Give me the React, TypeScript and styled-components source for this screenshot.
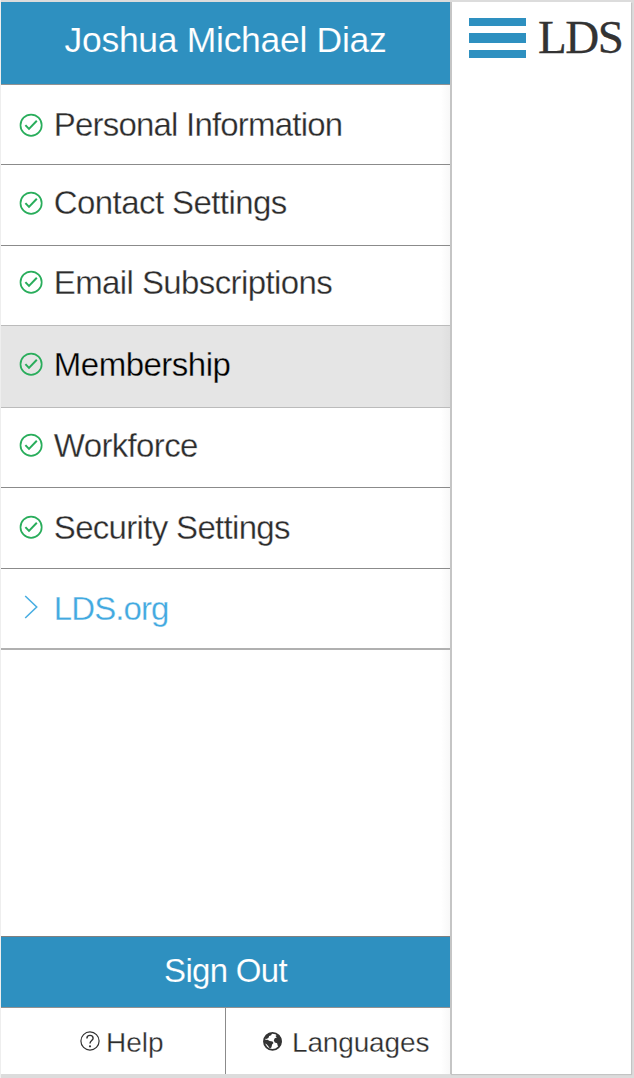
import React from 'react';
import styled, { createGlobalStyle } from 'styled-components';

const GlobalStyle = createGlobalStyle`
  * { box-sizing: border-box; }
  body { margin: 0; background: #dcdcdc; }
`;

const Page = styled.div`
  display: flex;
  width: 634px;
  height: 1078px;
  padding: 2px 3px 4px 1px;
  background: linear-gradient(to right, #eee 1px, #dcdcdc 1px);
  font-family: 'Liberation Sans', Helvetica, Arial, sans-serif;
  color: #333;
`;

const Sidebar = styled.aside`
  display: flex;
  flex-direction: column;
  width: 449px;
  height: 1072px;
  background: linear-gradient(to left, #f8f8f8, #fff 9px);
`;

/* A hairline in the surface colour trims the strokes to a light weight. */
const Text = styled.span<{ $size?: number; $spacing?: number; $surface?: string; $trim?: number }>`
  font-size: ${(p) => p.$size ?? 33}px;
  letter-spacing: ${(p) => p.$spacing ?? 0}px;
  line-height: 40px;
  white-space: nowrap;
  -webkit-text-stroke: ${(p) => p.$trim ?? 0.3}px ${(p) => p.$surface ?? '#fff'};
`;

const Header = styled.header`
  display: flex;
  justify-content: center;
  height: 82.5px;
  padding-top: 18px;
  background: #2e90c0;
  border-bottom: 1px solid #929292;
  color: #fff;
`;

const Menu = styled.nav`
  display: flex;
  flex-direction: column;
  flex: 1;
`;

const MenuItem = styled.a<{ $height: number; $top: number; $active?: boolean; $link?: boolean; $line: string }>`
  display: flex;
  align-items: flex-start;
  height: ${(p) => p.$height}px;
  padding: ${(p) => p.$top}px 0 0 17px;
  gap: 11.8px;
  border-bottom: ${(p) => (p.$link ? 2 : 1)}px solid ${(p) => p.$line};
  background: ${(p) => (p.$active ? 'linear-gradient(to left, #dfdfdf, #e5e5e5 9px)' : 'transparent')};
  color: ${(p) => (p.$active ? '#000' : p.$link ? '#42a9e0' : '#2c2c2c')};
`;

const IconSlot = styled.span<{ $drop: number }>`
  display: flex;
  width: 24px;
  height: 24px;
  margin-top: ${(p) => p.$drop}px;
  svg { overflow: visible; }
`;

const SignOut = styled.button`
  display: flex;
  justify-content: center;
  height: 72px;
  padding: 14px 0 0;
  border: 0;
  border-top: 1px solid #808080;
  border-bottom: 1px solid #929292;
  background: #2e90c0;
  font: inherit;
  color: #fff;
`;

const Footer = styled.footer`
  display: flex;
  height: 66px;
`;

const FooterLink = styled.a<{ $left: number; $width: number; $gap: number }>`
  display: flex;
  align-items: flex-start;
  width: ${(p) => p.$width}px;
  padding: 15px 0 0 ${(p) => p.$left}px;
  gap: ${(p) => p.$gap}px;
  color: #2c2c2c;
  & + & { border-left: 1px solid #8b8b8b; }
  svg { flex: none; margin-top: 8px; }
  & + & svg { margin-top: 9px; }
`;

const Content = styled.main`
  display: flex;
  align-items: flex-start;
  width: 181px;
  height: 1072px;
  padding: 15px 0 0 17px;
  gap: 12px;
  background: #fff;
  border-left: 2px solid #c5c5c5;
  box-shadow: 1px 1px 1px #c4c4c4;
`;

const Burger = styled.button`
  display: flex;
  flex-direction: column;
  width: 57px;
  padding: 1px 0 0;
  border: 0;
  background: none;
  gap: 7px;
`;

const Bar = styled.span<{ $height: number }>`
  height: ${(p) => p.$height}px;
  background: #2e90c0;
`;

const Logo = styled.span`
  margin-top: -4px;
  font: 47px/48px 'Liberation Serif', serif;
  letter-spacing: -1.5px;
  color: #333;
  -webkit-text-stroke: 0.3px #333;
`;

const CheckIcon = () => (
  <svg width="24" height="24" viewBox="0 0 24 24" fill="none" stroke="#29ad5b">
    <circle cx="13.1" cy="12.2" r="10.6" strokeWidth="1.7" />
    <path d="M7.4 12.1l3.6 3.8 7.8-8.1" strokeWidth="2" />
  </svg>
);

const ChevronIcon = () => (
  <svg width="24" height="24" viewBox="0 0 24 24" fill="none" stroke="#4aaee2" strokeWidth="1.6">
    <path d="M7.2 1l11.5 11-11.5 11" />
  </svg>
);

const HelpIcon = () => (
  <svg width="20" height="20" viewBox="0 0 20 20" fill="none" stroke="#333">
    <circle cx="10" cy="10" r="9.1" strokeWidth="1.2" />
    <path d="M6.9 7.4C6.9 5.4 8.2 4.4 10 4.4s3.1 1 3.1 2.8c0 2.3-3.1 2.4-3.1 5.2" strokeWidth="1.4" />
    <circle cx="10" cy="15.3" r="1.1" fill="#333" stroke="none" />
  </svg>
);

const GlobeIcon = () => (
  <svg width="20" height="20" viewBox="0 0 20 20" fill="#333">
    <circle cx="10.5" cy="10.4" r="8.5" fill="none" stroke="#333" strokeWidth="1.9" />
    <path d="M2.2 9l3.3-.3 2.2 1.3 2.8.5 1 1.5-1.4 1.6-.6 2.7-1.6 1.5-1.6-2.6-1.7-2-2.1-1z" />
    <path d="M5 3.4l3-1.6 2 .7-.8 1.7-2 .8-.8 2-2.2 1L3 7.2z" />
    <path d="M13.4 5.1l1.8-1.4 2.2.9 1.8 3.2.3 3.5-1.7 3.5-1.9.5-.8-3-2.3-.7-1-2.1.9-2.2 2.2-.7z" />
  </svg>
);

const items = [
  { label: 'Personal Information', height: 80.5, top: 20.5, drop: 8, spacing: -0.8, line: '#8b8b8b' },
  { label: 'Contact Settings', height: 81, top: 18, drop: 8, spacing: -0.58, line: '#8b8b8b' },
  { label: 'Email Subscriptions', height: 80, top: 17, drop: 7, spacing: -0.6, line: '#bbb' },
  { label: 'Membership', height: 82, top: 19, drop: 6.7, spacing: -0.5, line: '#bbb', active: true },
  { label: 'Workforce', height: 80, top: 18, drop: 7, spacing: -0.65, line: '#8b8b8b' },
  { label: 'Security Settings', height: 81, top: 20, drop: 7.4, spacing: -0.68, line: '#8b8b8b' },
  { label: 'LDS.org', height: 81, top: 20, drop: 6, spacing: -0.9, line: '#b0b0b0', link: true },
];

export default function App() {
  return (
    <>
      <GlobalStyle />
      <Page>
        <Sidebar>
          <Header><Text $size={35.5} $spacing={-0.3} $surface="#2e90c0" $trim={0.15}>Joshua Michael Diaz</Text></Header>
          <Menu>
            {items.map((item) => (
              <MenuItem key={item.label} $height={item.height} $top={item.top} $line={item.line} $active={item.active} $link={item.link}>
                <IconSlot $drop={item.drop}>{item.link ? <ChevronIcon /> : <CheckIcon />}</IconSlot>
                <Text $spacing={item.spacing} $surface={item.active ? '#e5e5e5' : '#fff'}>{item.label}</Text>
              </MenuItem>
            ))}
          </Menu>
          <SignOut><Text $spacing={-0.7} $surface="#2e90c0" $trim={0.15}>Sign Out</Text></SignOut>
          <Footer>
            <FooterLink $left={79} $width={224} $gap={6}><HelpIcon /><Text $size={28}>Help</Text></FooterLink>
            <FooterLink $left={36} $width={225} $gap={10}><GlobeIcon /><Text $size={28} $spacing={-0.15}>Languages</Text></FooterLink>
          </Footer>
        </Sidebar>
        <Content>
          <Burger aria-label="Menu"><Bar $height={8} /><Bar $height={10} /><Bar $height={8} /></Burger>
          <Logo>LDS</Logo>
        </Content>
      </Page>
    </>
  );
}
